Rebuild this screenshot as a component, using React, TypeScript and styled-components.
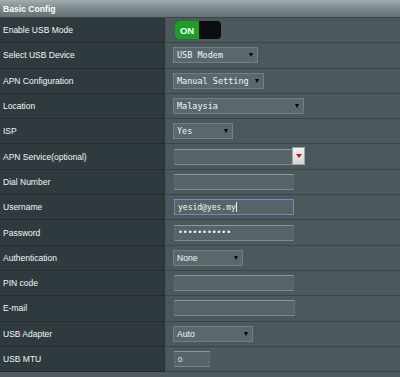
import styled, { createGlobalStyle } from "styled-components";

const GlobalStyle = createGlobalStyle`
  html, body {
    margin: 0;
    padding: 0;
    background: #4f5b5f;
  }
  body {
    font-family: "Liberation Sans", Arial, sans-serif;
    width: 400px;
    height: 377px;
    overflow: hidden;
  }
`;

type Control =
  | { kind: "toggle" }
  | { kind: "select"; value: string; width: number; mono?: boolean }
  | { kind: "input"; value?: string; width: number; focused?: boolean; sans?: boolean }
  | { kind: "combo"; width: number };

interface Field {
  label: string;
  control: Control;
}

const fields: Field[] = [
  { label: "Enable USB Mode", control: { kind: "toggle" } },
  { label: "Select USB Device", control: { kind: "select", value: "USB Modem", width: 85, mono: true } },
  { label: "APN Configuration", control: { kind: "select", value: "Manual Setting", width: 91, mono: true } },
  { label: "Location", control: { kind: "select", value: "Malaysia", width: 131, mono: true } },
  { label: "ISP", control: { kind: "select", value: "Yes", width: 60, mono: true } },
  { label: "APN Service(optional)", control: { kind: "combo", width: 118 } },
  { label: "Dial Number", control: { kind: "input", width: 120 } },
  { label: "Username", control: { kind: "input", value: "yesid@yes.my", width: 120, focused: true } },
  { label: "Password", control: { kind: "input", value: "•••••••••••", width: 120 } },
  { label: "Authentication", control: { kind: "select", value: "None", width: 70 } },
  { label: "PIN code", control: { kind: "input", width: 120 } },
  { label: "E-mail", control: { kind: "input", width: 121 } },
  { label: "USB Adapter", control: { kind: "select", value: "Auto", width: 80 } },
  { label: "USB MTU", control: { kind: "input", value: "0", width: 36, sans: true } },
];

const renderControl = (control: Control) => {
  switch (control.kind) {
    case "toggle":
      return (
        <Toggle>
          <ToggleOn>ON</ToggleOn>
          <ToggleKnob />
        </Toggle>
      );
    case "select":
      return (
        <Select $width={control.width} $mono={control.mono}>
          <span>{control.value}</span>
          <Caret />
        </Select>
      );
    case "combo":
      return (
        <Combo>
          <TextInput $width={control.width} />
          <ComboButton>
            <RedCaret />
          </ComboButton>
        </Combo>
      );
    case "input":
      return (
        <TextInput $width={control.width} $focused={control.focused} $sans={control.sans}>
          {control.value}
          {control.focused && <Cursor />}
        </TextInput>
      );
  }
};

const App = () => {
  return (
    <>
      <GlobalStyle />
      <Panel>
        <Header>Basic Config</Header>
        {fields.map((field) => (
          <Row key={field.label}>
            <Label>{field.label}</Label>
            <Value>{renderControl(field.control)}</Value>
          </Row>
        ))}
      </Panel>
    </>
  );
};

const Panel = styled.div`
  display: flex;
  flex-direction: column;
  width: 400px;
`;

const Header = styled.div`
  height: 18px;
  display: flex;
  align-items: center;
  padding-left: 3px;
  box-sizing: border-box;
  background: linear-gradient(#a3adb0, #7a868a 55%, #637074);
  color: #ffffff;
  font-weight: bold;
  font-size: 8.6px;
  border-bottom: 1px solid #3c474b;
`;

const Row = styled.div`
  display: grid;
  grid-template-columns: 165px 1fr;
  height: 25.3px;
`;

const Label = styled.div`
  display: flex;
  align-items: center;
  padding-left: 3px;
  background: #2f3a3e;
  color: #f4f6f6;
  font-size: 8.5px;
  border-bottom: 1px solid #232b2e;
  border-right: 1px solid #283235;
`;

const Value = styled.div`
  display: flex;
  align-items: center;
  padding-left: 8px;
  background: #4b585c;
  border-bottom: 1px solid #3a4549;
`;

const Toggle = styled.div`
  display: flex;
  width: 46px;
  height: 18px;
  margin-left: 2px;
  border-radius: 4px;
  overflow: hidden;
  background: #0e1112;
`;

const ToggleOn = styled.div`
  width: 24px;
  background: #1d9f24;
  color: #ffffff;
  font-size: 9.5px;
  font-weight: bold;
  display: flex;
  align-items: center;
  justify-content: center;
  border-radius: 3px 0 0 3px;
`;

const ToggleKnob = styled.div`
  flex: 1;
  background: #0b0d0e;
  border-radius: 5px;
`;

const Select = styled.div<{ $width: number; $mono?: boolean }>`
  width: ${({ $width }) => $width}px;
  height: 16px;
  box-sizing: border-box;
  display: flex;
  align-items: center;
  justify-content: space-between;
  padding: 0 4px 0 3px;
  background: #5a686c;
  border: 1px solid #718084;
  color: #f2f4f4;
  font-family: ${({ $mono }) =>
    $mono ? '"DejaVu Sans Mono", "Liberation Mono", monospace' : '"Liberation Sans", Arial, sans-serif'};
  font-size: ${({ $mono }) => ($mono ? "8.5px" : "8.6px")};
`;

const Caret = styled.span`
  width: 0;
  height: 0;
  border-left: 2.5px solid transparent;
  border-right: 2.5px solid transparent;
  border-top: 4px solid #050505;
`;

const TextInput = styled.div<{ $width: number; $focused?: boolean; $sans?: boolean }>`
  width: ${({ $width }) => $width}px;
  height: 16px;
  box-sizing: border-box;
  margin-left: 1px;
  display: flex;
  align-items: center;
  padding-left: 3px;
  background: #56646a;
  border: 1px solid ${({ $focused }) => ($focused ? "#6e8cb8" : "#5f6d71")};
  border-top-color: ${({ $focused }) => ($focused ? "#6e8cb8" : "#8a979a")};
  border-bottom-color: ${({ $focused }) => ($focused ? "#6e8cb8" : "#7d8a8d")};
  color: #f4f6f6;
  font-family: ${({ $sans }) =>
    $sans ? '"Liberation Sans", Arial, sans-serif' : '"DejaVu Sans Mono", "Liberation Mono", monospace'};
  font-size: 8px;
  white-space: pre;
`;

const Cursor = styled.span`
  width: 1px;
  height: 10px;
  background: #f0f0f0;
`;

const Combo = styled.div`
  display: flex;
  align-items: center;
`;

const ComboButton = styled.div`
  width: 13px;
  height: 18px;
  margin-top: -2px;
  display: flex;
  align-items: center;
  justify-content: center;
  background: linear-gradient(#f0f0f0, #d4d6d6);
  border: 1px solid #9aa4a6;
  box-sizing: border-box;
`;

const RedCaret = styled.span`
  width: 0;
  height: 0;
  border-left: 3.5px solid transparent;
  border-right: 3.5px solid transparent;
  border-top: 4px solid #c8141a;
`;

export default App;
